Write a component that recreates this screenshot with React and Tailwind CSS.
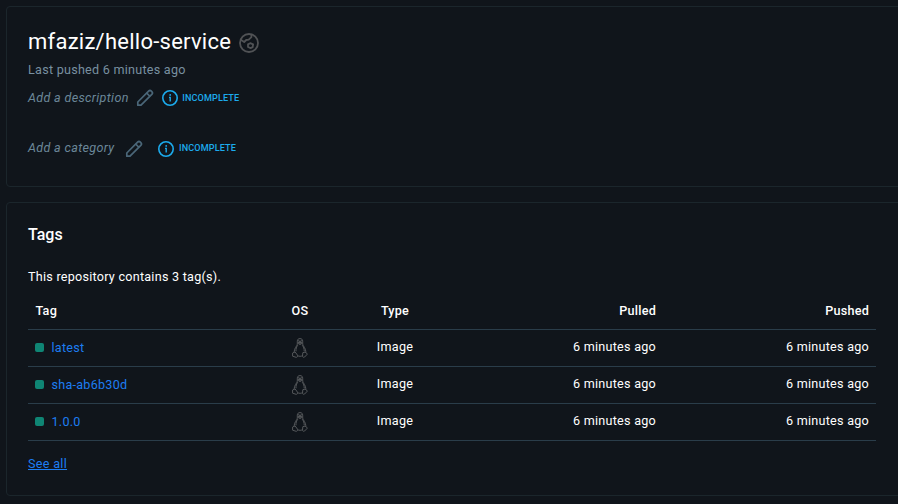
const tags = ["latest", "sha-ab6b30d", "1.0.0"];

function Globe() {
  return (
    <svg className="mt-[5px] ml-[8px] h-5 w-5 shrink-0" viewBox="0 0 20 20" fill="none" stroke="#505255" strokeWidth="1.8" strokeLinejoin="round" strokeLinecap="round">
      <circle cx="10" cy="10" r="9" />
      <path d="M1.8 6.8 5.2 9l2-2 2.5-.4 2.7-2.4V1.6" />
      <path d="M9 11.4 11.2 10.2l2.9 1.2-.4 2.8-2.1.9-2.6-1.1z" />
    </svg>
  );
}

function Pencil() {
  return (
    <svg className="h-[18px] w-[18px] shrink-0" viewBox="0 0 18 18" fill="none" stroke="#4a6678" strokeWidth="1.7" strokeLinejoin="round" strokeLinecap="round">
      <path d="M1.8 16.2v-3.2L12.6 2.2a2 2 0 0 1 2.8 0l.4.4a2 2 0 0 1 0 2.8L5 16.2z" />
      <path d="m11 4.4 2.6 2.6" />
    </svg>
  );
}

function Info() {
  return (
    <svg className="h-4 w-4 shrink-0" viewBox="0 0 16 16" fill="none">
      <circle cx="8" cy="8" r="7.2" stroke="#1cabed" strokeWidth="1.6" />
      <path d="M7 7.4H8.2v4.2" stroke="#1cabed" strokeWidth="1.4" />
      <circle cx="8.2" cy="4.9" r=".9" fill="#1cabed" />
    </svg>
  );
}

function Penguin() {
  return (
    <svg className="h-5 w-4" viewBox="0 0 16 20" fill="none" stroke="#55585b" strokeWidth="1" strokeLinejoin="round">
      <path d="M5.3 6.2V3.2C5.3 1.4 6.4.6 8 .6s2.7.8 2.7 2.6v2.9c.3 2 3.1 4.2 3.1 7.5 0 .5-.1.9-.2 1.2M5.3 6.2c-.3 1.9-3.1 4.1-3.1 7.4v.9" />
      <path d="M5.8 7.2c-1.3 1.8-2 3.4-1.8 6.1M10.2 7.2c1.3 1.8 2.1 3.4 2 6.1M5.5 17.7c1.6.8 3.6.8 5 0" />
      <path d="M.6 15 3 13.8l2.6 3.5c.4 1-.3 2-1.5 2L.6 18.2zM15.4 16.1l-2-2.1-2.6.7-.3 3.6c.2 1 1.3 1.3 2.1.7z" />
      <path d="M6.2 4.2 8 3.5l1.8.7L8 5.4z" fill="#55585b" />
      <path d="M6.8 2v1M9.2 2v1M5.9 5.3 8 6.6l2.1-1.3" />
    </svg>
  );
}

function EditableField({ label, gap }) {
  return (
    <div className="flex h-5 items-center text-[#6b8799]">
      <span className={gap === "wide" ? "-mt-[2px] italic tracking-[0.32px]" : "italic tracking-[0.32px]"}>{label}</span>
      <span className={gap === "wide" ? "ml-[11px] flex" : "ml-[7px] flex"}><Pencil /></span>
      <span className={gap === "wide" ? "ml-[15px] flex" : "ml-[8px] flex"}><Info /></span>
      <span className={gap === "wide" ? "-mt-[2px] ml-[4.5px] text-[9.1px] font-medium tracking-[0.12px] text-[#1cabed]" : "ml-[4.5px] text-[9.1px] font-medium tracking-[0.12px] text-[#1cabed]"}>INCOMPLETE</span>
    </div>
  );
}

export default function App() {
  return (
    <div className="h-[504px] w-[898px] overflow-hidden bg-[#10151b] pt-[6px] pl-[6px] font-['Roboto',sans-serif] text-[12.6px] leading-5 tracking-[0.25px] text-white">
      <section className="h-[181px] w-[920px] rounded-sm border border-[#1b262c] px-[21px] pt-[21px]">
        <div className="flex h-7 items-start">
          <h1 className="text-[22px] leading-7 tracking-[0.25px]">mfaziz/hello-service</h1>
          <Globe />
        </div>
        <p className="mt-[4px] text-[#7890a0]">Last pushed 6 minutes ago</p>
        <div className="mt-[8px]"><EditableField label="Add a description" /></div>
        <div className="mt-[31px]"><EditableField label="Add a category" gap="wide" /></div>
      </section>

      <section className="mt-[15px] h-[294px] w-[920px] rounded-sm border border-[#1b262c] px-[21px] pt-[22px]">
        <h2 className="text-[16px] leading-5 font-medium tracking-normal">Tags</h2>
        <p className="mt-[22px]">This repository contains 3 tag(s).</p>
        <table className="mt-[5px] w-[848px] table-fixed border-collapse">
          <colgroup>
            <col className="w-[227px]" />
            <col className="w-[90px]" />
            <col className="w-[100px]" />
            <col className="w-[218px]" />
            <col className="w-[213px]" />
          </colgroup>
          <thead>
            <tr className="h-[37px] border-b border-[#2a3d4a]">
              <th className="pt-[2px] pl-[7.5px] text-left font-medium">Tag</th>
              <th className="pt-[2px] font-medium">OS</th>
              <th className="pt-[2px] font-medium">Type</th>
              <th className="pt-[2px] pr-[7px] text-right font-medium">Pulled</th>
              <th className="pt-[2px] pr-[7px] text-right font-medium">Pushed</th>
            </tr>
          </thead>
          <tbody>
            {tags.map((tag) => (
              <tr key={tag} className="h-[37px] border-b border-[#2a3d4a]">
                <td className="pl-[7px]">
                  <div className="flex items-center">
                    <span className="mr-[7.5px] h-[9px] w-[9px] rounded-[2px] bg-[#0f8574]" />
                    <a className="tracking-[0.25px] text-[#1d7df2]">{tag}</a>
                  </div>
                </td>
                <td><div className="flex justify-center"><Penguin /></div></td>
                <td className="pb-[2px] text-center">Image</td>
                <td className="pr-[7px] pb-[2px] text-right">6 minutes ago</td>
                <td className="pr-[7px] pb-[2px] text-right">6 minutes ago</td>
              </tr>
            ))}
          </tbody>
        </table>
        <a className="mt-[13px] inline-block tracking-[0.3px] text-[#1d7df2] underline">See all</a>
      </section>
    </div>
  );
}
